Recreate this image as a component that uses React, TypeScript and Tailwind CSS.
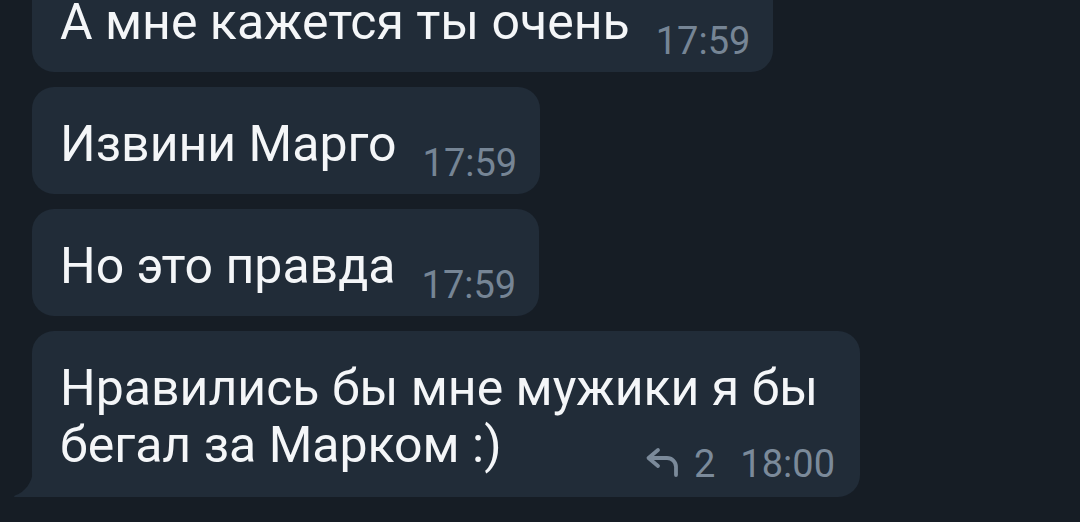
import React from "react";

function ReplyIcon() {
  return (
    <svg width="36" height="30" viewBox="0 0 36 30" fill="none" className="mr-[13px] relative top-[-2px]">
      <path
        d="M13 3 L3.5 11 L13 19 M4 11 H22 A9 9 0 0 1 31 20 V28"
        stroke="#7b8a9a"
        strokeWidth="3.8"
        strokeLinecap="round"
        strokeLinejoin="round"
      />
    </svg>
  );
}

function Time({ children }: { children: React.ReactNode }) {
  return (
    <span className="relative top-[15px] shrink-0 text-[38px] leading-none text-[#768595] whitespace-nowrap">
      {children}
    </span>
  );
}

function Bubble({ text }: { text: string }) {
  return (
    <div className="self-start rounded-[22px] bg-[#212c38] pl-[28px] pr-[23px] pt-[29px] pb-[21px]">
      <div className="flex items-baseline gap-[26px]">
        <span className="whitespace-nowrap">{text}</span>
        <Time>17:59</Time>
      </div>
    </div>
  );
}

export default function App() {
  return (
    <div
      className="w-[1080px] h-[522px] overflow-hidden bg-[#161d25] text-[#f4f6f8]"
      style={{ fontFamily: "Roboto, 'Noto Sans', sans-serif" }}
    >
      <div className="flex flex-col gap-[15px] pl-[32px] mt-[-35px] text-[50px] leading-[57px]">
        <Bubble text="А мне кажется ты очень" />
        <Bubble text="Извини Марго" />
        <Bubble text="Но это правда" />
        <div className="relative self-start w-[828px] rounded-[22px] rounded-bl-none bg-[#212c38] pl-[28px] pr-[25px] pt-[29px] pb-[23px]">
          <div className="whitespace-nowrap">Нравились бы мне мужики я бы</div>
          <div className="flex items-baseline justify-between">
            <span className="whitespace-nowrap">бегал за Марком :)</span>
            <span className="relative top-[15px] flex items-baseline text-[38px] leading-none text-[#7b8a9a] whitespace-nowrap">
              <span className="self-center flex"><ReplyIcon /></span>
              <span>2</span>
              <span className="ml-[25px]">18:00</span>
            </span>
          </div>
          <svg
            className="absolute left-[-19px] bottom-0"
            width="20"
            height="26"
            viewBox="0 0 20 26"
          >
            <path d="M20 0 C19 12 12 21 2 24.5 Q0 25.5 2 26 L20 26 Z" fill="#212c38" />
          </svg>
        </div>
      </div>
    </div>
  );
}
